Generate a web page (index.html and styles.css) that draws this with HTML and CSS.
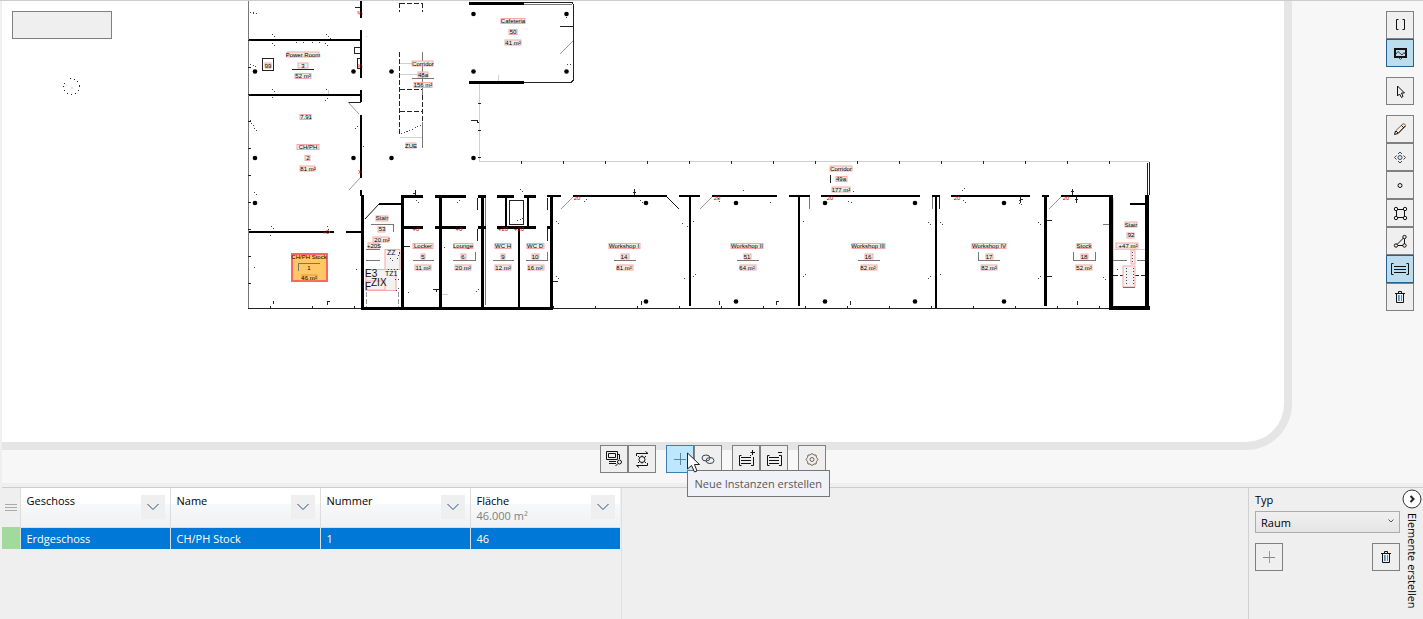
FILE: index.html
```html
<!DOCTYPE html>
<html lang="de">
<head>
<meta charset="utf-8">
<title>Grundriss – Elemente</title>
<link rel="stylesheet" href="styles.css">
</head>
<body>
<main class="workspace">
  <section class="paper" aria-label="Grundriss">
    <svg class="plan" viewBox="2 1 1282 441">
      <!-- thin grey outlines -->
      <path class="faint" d="M479.5 84V161.5H1149M400 137.5H422M400 63.5H422M400 74.5H422M498.5 75V81M1113 249.5H1145M1113.5 198V305M441 294.5H448M328 90V94M366 36H367"/>
      <path class="gray" d="M248.5 1V308M422.5 52V95M422.5 122V148M412 78.5H434M524 4.5H572M371 224.5H393V232M413 260.5H434M453 260.5H475V252M493 260.5H514M526 260.5H547V252M614 260.5H636M737 260.5H759M858 260.5H880M978.5 252V260.5H1000M1073.5 252V260.5H1095.5V252M1113 260.5H1127M1137 260.5H1145M366 249.5H380M366 260.5H380M485.5 198V305M1103 224.5H1109M932.5 197V209M809.5 197V209"/>
      <!-- dashed stair run in the corridor -->
      <path class="dash" d="M399.5 3V12M399.5 3.5H422M422.5 3V12M399.5 52V136M422.5 95V121M400 89.5H422M400 111.5H422M1113 275.5H1145"/>
      <path class="dash graydash" d="M366.5 292V307M398.5 292V307"/>
      <path class="speck" d="M401 134L422 125"/>
      <!-- outlines -->
      <path class="thin" d="M248 308.5H362M552 308.5H1110M292 69.5H314M348 102.5H361M560 26.5H573M524 2.5H572L573.5 5V80L571 82.5H524M471 120.5H477V122H479M477.5 198V210M547.5 198V210M477.5 229V241M547.5 229V241M403 246.5H410M830.5 175V183M939.5 197V209M1147.5 163V195M1149.5 162V195M1047 220.5H1052M1047 276.5H1052M433 289.5H439M436.5 289V292M553 281.5H558M262.5 58.5H273.5V70.5H262.5ZM354.5 47.5H360V53.5H354.5ZM357.5 58.5H361V68.5H357.5ZM509.5 200.5H523.5V224.5H509.5ZM355 7.5H361M1123 287.5H1135"/>
      <path class="slant" d="M348 102L359 114M349 190L360 178M560 54L573 41M561 209L573 197M700 209L712 197M1049 209L1061 197"/>
      <path class="slant dark" d="M365 219L379 204M667 197L679 209"/>
      <!-- walls -->
      <path class="wall" d="M249 40H361M249 95H361M361 1V18M361 30V78M361 90V102M361 115V178M361 190V196M249 232H334M346 232H362M379 204H401M519 229V307M690 197V306M799 197V306M936 197V308M506 197V227M528 197V227M1130 204H1146M573 196H667M679 196H700M712 196H777M789 196H810M821 196H920M932 196H940M951 196H1030M1042 196H1049M1061 196H1111M547 196H561"/>
      <path class="wall heavy" d="M469 3.500H524M469 82.500H524M362.500 195V310M402.500 195V308M440.500 195V308M482.500 195V308M551.500 195V310M362 308.500H552M402 196.500H423M435 196.500H466M478 196.500H486M497 196.500H514M524 196.500H536M402 227.500H423M435 227.500H466M478 227.500H486M497 227.500H536M547 227.500H552M1045.500 197V306"/>
      <path class="wall massive" d="M1111 195V310M1147 195V310M1109 308H1150"/>
      <!-- grid ticks -->
      <path class="ticks" d="M521 162H1149"/>
      <path class="ticks" d="M270 307H362M553 307H1110"/>
      <path class="ticks vertical" d="M249 40V308M479 103V160"/>
      <path class="speck" d="M250 12L257 14M272 34L276 38M326 34L331 39M250 64L256 67M272 43L276 48M325 43L329 48M272 89L275 92M326 89L330 92M272 97L275 101M325 101L329 97M250 120L257 132M355 129L359 125M363 146L366 150M254 192L257 195M271 226L275 231M270 235L274 238M327 226L330 234M254 267L257 272M356 269L359 273M296 42V45M303 42V45M312 42V45M319 42V45M416 200L420 204M457 203L462 199M444 247L448 250M408 293L411 289M476 292L479 289M520 189L526 194M517 221L524 218M584 202L588 199M640 200L643 203M682 223L688 227M684 278L688 281M693 221L697 224M693 277L697 274M718 198L720 203M770 203L773 199M803 221L806 225M803 277L806 274M928 222L932 226M928 279L932 276M940 222L943 225M940 275L943 273M962 191L965 188M963 200L966 203M1038 222L1042 226M1038 279L1042 276M1103 277L1107 281M556 221L559 224M556 276L559 279M743 190H745M848 201L852 203M1019 200V204H1022M853 191L856 195M566 17L570 20M567 64H572"/>
      <path class="thin" d="M273.500 301V304M329.500 301H327.500V305M413 193.500H416M415.500 190V195M633 192.500H636M634.500 189V195M641.500 301V305M719.500 301V305M776.500 305V301H779M850.500 305V301M1077.500 301V305M1020 199.500H1023M1020.500 197V203M1071 191.500H1074M1072.500 189V195M1075 199.500H1078M1076.500 197V203"/>
      <!-- columns -->
      <g class="columns">
        <circle cx="255" cy="71.500" r="2.300"/><circle cx="353.500" cy="71.500" r="2.300"/><circle cx="391.500" cy="71.500" r="2.300"/><circle cx="473.500" cy="14" r="2.300"/><circle cx="566.500" cy="14" r="2.300"/><circle cx="473.500" cy="71.500" r="2.300"/><circle cx="566.500" cy="71.500" r="2.300"/>
        <circle cx="255" cy="158" r="2.300"/><circle cx="353.500" cy="158" r="2.300"/><circle cx="391.500" cy="158" r="2.300"/><circle cx="473.500" cy="158" r="2.300"/><circle cx="255" cy="203" r="2.300"/>
        <circle cx="646" cy="203" r="2.300"/><circle cx="736" cy="203" r="2.300"/><circle cx="825" cy="203" r="2.300"/><circle cx="915" cy="203" r="2.300"/><circle cx="1004" cy="203" r="2.300"/>
        <circle cx="646" cy="301.500" r="2.300"/><circle cx="736" cy="301.500" r="2.300"/><circle cx="825" cy="301.500" r="2.300"/><circle cx="915" cy="301.500" r="2.300"/><circle cx="1004" cy="301.500" r="2.300"/>
      </g>
      <!-- selected room -->
      <rect class="selected" x="292" y="254" width="35" height="27"/>
      <path class="gray" d="M298.500 271V263.500H320"/>
      <!-- label frames -->
      <g class="frames">
        <rect x="501" y="18.500" width="24" height="5"/><rect x="509" y="29.500" width="8" height="5"/><rect x="505" y="40" width="16" height="5"/>
        <rect x="287" y="52" width="32" height="5"/><rect x="298" y="63" width="10" height="5"/><rect x="295" y="73.500" width="16" height="5"/><rect x="265" y="63" width="6" height="5"/>
        <rect x="412" y="61" width="21" height="5"/><rect x="418" y="72" width="10" height="5"/><rect x="414" y="82.500" width="18" height="5"/><rect x="406" y="143" width="10" height="5"/>
        <rect x="300" y="114.500" width="11" height="5"/><rect x="297" y="144.500" width="22" height="5"/><rect x="305" y="155.500" width="5" height="5"/><rect x="300" y="166" width="15" height="5"/>
        <rect x="376" y="216" width="12" height="5"/><rect x="378" y="227" width="7" height="5"/><rect x="373" y="237" width="16" height="5"/><rect x="368" y="243" width="11" height="5"/>
        <rect x="413" y="243.500" width="20" height="5"/><rect x="421" y="254" width="4" height="5"/><rect x="415" y="265" width="16" height="5"/>
        <rect x="454" y="243.500" width="19" height="5"/><rect x="461" y="254" width="5" height="5"/><rect x="455" y="265" width="16" height="5"/>
        <rect x="495" y="243.500" width="16" height="5"/><rect x="501" y="254" width="4" height="5"/><rect x="495" y="265" width="16" height="5"/>
        <rect x="527" y="243.500" width="17" height="5"/><rect x="532" y="254" width="7" height="5"/><rect x="528" y="265" width="16" height="5"/>
        <rect x="609" y="243.500" width="31" height="5"/><rect x="621" y="254" width="8" height="5"/><rect x="617" y="265" width="16" height="5"/>
        <rect x="731" y="243.500" width="32" height="5"/><rect x="744" y="254" width="7" height="5"/><rect x="740" y="265" width="16" height="5"/>
        <rect x="852" y="243.500" width="33" height="5"/><rect x="865" y="254" width="8" height="5"/><rect x="861" y="265" width="16" height="5"/>
        <rect x="972" y="243.500" width="34" height="5"/><rect x="986" y="254" width="7" height="5"/><rect x="981" y="265" width="16" height="5"/>
        <rect x="1077" y="243.500" width="14" height="5"/><rect x="1081" y="254" width="7" height="5"/><rect x="1076" y="265" width="16" height="5"/>
        <rect x="830" y="166" width="22" height="5"/><rect x="836" y="176.500" width="11" height="5"/><rect x="832" y="187" width="18" height="5"/>
        <rect x="1125" y="222" width="12" height="5"/><rect x="1127" y="233" width="7" height="5"/><rect x="1116" y="243" width="22" height="5"/>
        <rect x="302" y="275" width="15" height="5" class="clear"/>
      </g>
      <g class="frames shaft">
        <rect x="385" y="249.500" width="15" height="20"/><rect x="366" y="269.500" width="30" height="21"/><rect x="366" y="281" width="19" height="9"/><rect x="1131" y="250" width="4" height="14"/><rect x="1123" y="266" width="12" height="21"/>
      </g>
      <path class="speck" d="M388 269H400M397 259L400 251M395 279H400M390 258L393 261M396 291L400 287M1132.500 252V264M1126 268V286M1133 268V285M1117 270L1120 265"/>
      <g class="label">
        <text x="513" y="23">Cafeteria</text><text x="513" y="34">50</text><text x="513" y="45">41 m²</text>
        <text x="303" y="57">Power Room</text><text x="303" y="68">3</text><text x="303" y="78">52 m²</text><text x="268" y="68">99</text>
        <text x="423" y="66">Corridor</text><text x="423" y="77">48a</text><text x="423" y="87">156 m²</text><text x="411" y="148">ZUE</text>
        <text x="306" y="119">7.91</text><text x="308" y="149">CH/PH</text><text x="308" y="160">2</text><text x="308" y="171">81 m²</text>
        <text x="382" y="220">Stair</text><text x="382" y="231">53</text><text x="382" y="242">20 m²</text><text x="374" y="248">+20S</text>
        <text x="423" y="248">Locker</text><text x="423" y="259">5</text><text x="423" y="270">11 m²</text>
        <text x="463" y="248">Lounge</text><text x="463" y="259">6</text><text x="463" y="270">20 m²</text>
        <text x="503" y="248">WC H</text><text x="503" y="259">9</text><text x="503" y="270">12 m²</text>
        <text x="535" y="248">WC D</text><text x="535" y="259">10</text><text x="535" y="270">16 m²</text>
        <text x="624" y="248">Workshop I</text><text x="624" y="259">14</text><text x="624" y="270">81 m²</text>
        <text x="747" y="248">Workshop II</text><text x="747" y="259">51</text><text x="747" y="270">64 m²</text>
        <text x="868" y="248">Workshop III</text><text x="868" y="259">16</text><text x="868" y="270">82 m²</text>
        <text x="989" y="248">Workshop IV</text><text x="989" y="259">17</text><text x="989" y="270">82 m²</text>
        <text x="1084" y="248">Stock</text><text x="1084" y="259">18</text><text x="1084" y="270">52 m²</text>
        <text x="841" y="171">Corridor</text><text x="841" y="181">49a</text><text x="841" y="192">177 m²</text>
        <text x="1131" y="227">Stair</text><text x="1131" y="237">92</text><text x="1128" y="248">+47 m²</text>
        <text x="309" y="259">CH/PH Stock</text><text x="309" y="270">1</text><text x="309" y="280">46 m²</text>
      </g>
      <g class="shaft-text">
        <text x="365" y="277">E3</text><text x="387" y="255" class="small">ZZ</text><text x="385" y="276" class="small">TZ1</text><text x="365" y="290">F</text><text x="371" y="286">ZIX</text>
      </g>
      <g class="tag">
        <text x="360" y="15">%</text><text x="360" y="68">%</text><text x="360" y="174">X</text><text x="326" y="234">+0</text><text x="416" y="231">+0</text><text x="459" y="231">+0</text><text x="503" y="231">+20</text><text x="519" y="231">+20</text><text x="577" y="200">20</text><text x="717" y="200">20</text><text x="830" y="200">20</text><text x="957" y="200">20</text><text x="1066" y="200">20</text>
      </g>
      <circle class="compass" cx="71.500" cy="86.500" r="8"/>
      <path class="compass-dot" d="M71 87h2v2h-2z"/>
    </svg>
    <input class="canvas-field" type="text" aria-label="Bezeichnung">
  </section>

  <nav class="side-tools" aria-label="Zeichenwerkzeuge">
    <div class="stack">
      <button class="tool" aria-label="Klammern"><svg viewBox="0 0 26 26"><path class="ink" d="M11.500 7.500H9.500V17.500H11.500M15.500 7.500H17.500V17.500H15.500"/></svg></button>
      <button class="tool active" aria-label="Hintergrundbild"><svg viewBox="0 0 26 26"><path class="ink bold" d="M8 9H19V17H8Z"/><path class="ink soft" d="M9 14L11 11.500 15 15 17 12.500 18 14M11.500 17.500L13.500 19.500 15.500 17.500"/></svg></button>
    </div>
    <div class="stack">
      <button class="tool" aria-label="Auswählen"><svg viewBox="0 0 26 26"><path class="ink" d="M10.500 8V18L12.500 16 14.500 19.500 16 18.500 14.500 15H17.500Z"/></svg></button>
    </div>
    <div class="stack">
      <button class="tool" aria-label="Zeichnen"><svg viewBox="0 0 26 26"><path class="ink warm" d="M8.500 15L16 7.800Q18 7.500 18.500 9.500L11 17.500"/><path class="ink" d="M11 17.500L7.500 18.500 8.500 15M9 15L11 17M14.500 9.500L17 12M11 17.500L18.500 10"/></svg></button>
      <button class="tool" aria-label="Verschieben"><svg viewBox="0 0 26 26"><circle class="ink soft" cx="13" cy="13.500" r="2"/><path class="ink soft" d="M11 10L13 8 15 10M11 17L13 19 15 17M9.500 11.500L7.500 13.500 9.500 15.500M16.500 11.500L18.500 13.500 16.500 15.500"/></svg></button>
      <button class="tool" aria-label="Punkt"><svg viewBox="0 0 26 26"><circle class="ink" cx="13" cy="13.500" r="2"/></svg></button>
      <button class="tool" aria-label="Rechteck"><svg viewBox="0 0 26 26"><path class="ink" d="M9.500 11V16M17.500 11V16M11 9.500H16M11 17.500H16"/><circle class="ink" cx="9" cy="9" r="1.700"/><circle class="ink" cx="18" cy="9" r="1.700"/><circle class="ink" cx="9" cy="18" r="1.700"/><circle class="ink" cx="18" cy="18" r="1.700"/></svg></button>
      <button class="tool" aria-label="Polygon"><svg viewBox="0 0 26 26"><path class="ink" d="M10 16.500L16.500 10M17.500 11V16M11 17.500H16"/><circle class="ink" cx="17.500" cy="9" r="1.700"/><circle class="ink" cx="9" cy="17.500" r="1.700"/><circle class="ink" cx="17.500" cy="17.500" r="1.700"/></svg></button>
      <button class="tool active" aria-label="Beschriftung"><svg viewBox="0 0 26 26"><path class="ink" d="M6.500 7.500H4.500V18.500H6.500M19.500 7.500H21.500V18.500H19.500M7 10.500H19M7 13.500H19M7 16.500H19"/></svg></button>
      <button class="tool" aria-label="Löschen"><svg viewBox="0 0 26 26"><path class="ink" d="M8 9.500H18M11.500 9V7.500H14.500V9M9.500 9.500V18.500H16.500V9.500"/><path class="bin-blue" d="M11.500 11V17M14.500 11V17"/><path class="bin-warm" d="M12.500 11V17"/></svg></button>
    </div>
  </nav>

  <nav class="bottom-tools" aria-label="Elementwerkzeuge">
    <div class="row">
      <button class="tool" aria-label="Ansicht suchen"><svg viewBox="0 0 26 26"><path class="ink" d="M5.500 5.500H16.500V13.500H5.500ZM7.500 7.500H14.500V11.500H7.500ZM17 8.500H18.500V13M8 15.500H15M8 17.500H15"/><circle class="ink" cx="18.500" cy="16" r="2"/><path class="ink" d="M17 17.500L14.500 20"/></svg></button>
      <button class="tool" aria-label="Auf Auswahl zoomen"><svg viewBox="0 0 26 26"><circle class="ink" cx="13" cy="13.500" r="3"/><path class="ink" d="M7.500 10V7.500H19M16.500 5.500L19 7.500M18.500 17V19.500H7.500M10 21.500L7.500 19.500M13 9.500V10.500M13 16.500V17.500M9 10L10.500 11.500M17 10L15.500 11.500M9 17L10.500 15.500M17 17L15.500 15.500"/></svg></button>
    </div>
    <div class="row">
      <button class="tool hover" aria-label="Neue Instanzen erstellen" aria-describedby="tip"><svg viewBox="0 0 26 26"><path class="plus-blue" d="M7 13.500H19M13.500 7V19"/></svg></button>
      <button class="tool" aria-label="Verknüpfen"><svg viewBox="0 0 26 26"><ellipse class="ink soft" cx="11" cy="12" rx="4" ry="3"/><ellipse class="ink soft" cx="15" cy="14.500" rx="4" ry="3"/></svg></button>
      <svg class="cursor" viewBox="0 0 14 22" aria-hidden="true"><path d="M.5 1V17L4.500 13.500 7.500 20 10 19 7.500 12.500H12.500Z"/></svg>
      <span class="tooltip" id="tip" role="tooltip">Neue Instanzen erstellen</span>
    </div>
    <div class="row">
      <button class="tool" aria-label="Beschriftung hinzufügen"><svg viewBox="0 0 26 26"><path class="ink" d="M8.500 9.500H6.500V19.500H8.500M17 9.500H18M20.500 11V19.500H18M8 11.500H18M8 14.500H18M8 17.500H18M17.500 6.500H22M19.500 4V9"/></svg></button>
      <button class="tool" aria-label="Beschriftung entfernen"><svg viewBox="0 0 26 26"><path class="ink" d="M8.500 9.500H6.500V19.500H8.500M18 9.500H20.500V19.500H18M8 11.500H18M8 14.500H18M8 17.500H18M17 6.500H21"/></svg></button>
    </div>
    <div class="row">
      <button class="tool" aria-label="Einstellungen"><svg viewBox="0 0 26 26"><circle class="gear" cx="13" cy="13.500" r="2"/><path class="gear" d="M13 7.500L15 9 17 9 17.500 11.500 19 13.500 17.500 15.500 17 18 15 18 13 19.500 11 18 9 18 8.500 15.500 7 13.500 8.500 11.500 9 9 11 9Z"/></svg></button>
    </div>
  </nav>
</main>

<div class="dock">
  <section class="grid-area">
    <table class="grid">
      <colgroup><col class="handle-col"><col><col><col><col></colgroup>
      <thead>
        <tr>
          <td class="handle"><svg viewBox="0 0 12 8"><path d="M0 .5H12M0 3.500H12M0 6.500H12"/></svg></td>
          <th scope="col"><div class="head"><span class="title">Geschoss</span><button class="filter" aria-label="Geschoss filtern"><svg viewBox="0 0 12 8"><path d="M.5 1L6 6.500 11.500 1"/></svg></button></div></th>
          <th scope="col"><div class="head"><span class="title">Name</span><button class="filter" aria-label="Name filtern"><svg viewBox="0 0 12 8"><path d="M.5 1L6 6.500 11.500 1"/></svg></button></div></th>
          <th scope="col"><div class="head"><span class="title">Nummer</span><button class="filter" aria-label="Nummer filtern"><svg viewBox="0 0 12 8"><path d="M.5 1L6 6.500 11.500 1"/></svg></button></div></th>
          <th scope="col"><div class="head"><span class="title">Fläche<small>46.000 m²</small></span><button class="filter" aria-label="Fläche filtern"><svg viewBox="0 0 12 8"><path d="M.5 1L6 6.500 11.500 1"/></svg></button></div></th>
        </tr>
      </thead>
      <tbody>
        <tr class="picked"><td class="marker"></td><td>Erdgeschoss</td><td>CH/PH Stock</td><td>1</td><td>46</td></tr>
      </tbody>
    </table>
  </section>
  <aside class="create">
    <div class="form">
      <label for="typ">Typ</label>
      <div class="select-box">
        <select id="typ"><option>Raum</option></select>
        <svg viewBox="0 0 6 4"><path d="M.5 .5L3 3 5.500 .5"/></svg>
      </div>
      <div class="actions">
        <button class="tool" aria-label="Typ hinzufügen"><svg viewBox="0 0 26 26"><path class="plus-gray" d="M7 13.500H19"/><path class="plus-warm" d="M13.500 7V19"/></svg></button>
        <button class="tool" aria-label="Typ löschen"><svg viewBox="0 0 26 26"><path class="ink" d="M8 9.500H18M11.500 9V7.500H14.500V9M9.500 9.500V18.500H16.500V9.500"/><path class="bin-blue" d="M11.500 11V17M14.500 11V17"/><path class="bin-warm" d="M12.500 11V17"/></svg></button>
      </div>
    </div>
    <button class="expander">
      <svg viewBox="0 0 20 20"><circle cx="10" cy="10" r="9"/><path d="M8.500 7L11.500 10 8.500 13"/></svg>
      <span>Elemente erstellen</span>
    </button>
  </aside>
</div>
</body>
</html>
```

FILE: styles.css
```css
* { box-sizing: border-box; }
html, body { height: 100%; }
body {
  margin: 0;
  display: flex;
  flex-direction: column;
  border-top: 1px solid #ccc;
  background: #efefef;
  color: #000;
  font: 11px/16px "Open Sans", "Noto Sans", sans-serif;
  overflow: hidden;
}
button, input, select { font: inherit; color: inherit; margin: 0; }
svg { display: block; }

/* drawing area */
.workspace {
  position: relative;
  flex: 1;
  min-height: 0;
  display: flex;
  justify-content: space-between;
  margin-left: 2px;
  padding-bottom: 33px;
  background: #f7f7f7;
}
.paper {
  position: relative;
  flex: 1;
  margin-right: 94px;
  background: #fff;
  border: solid #e5e5e5;
  border-width: 0 8px 8px 0;
  border-bottom-right-radius: 46px;
}
.plan { width: 100%; height: 100%; }
.canvas-field {
  position: absolute;
  left: 10px;
  top: 10px;
  width: 100px;
  height: 28px;
  border: 1px solid #808080;
  background: #efefef;
}

/* plan strokes */
.plan path { fill: none; stroke: #000; stroke-width: 1; shape-rendering: crispEdges; }
.plan .faint { stroke: #d0d0d0; }
.plan .gray { stroke: #777; }
.plan .thin { stroke: #222; }
.plan .dash { stroke: #222; stroke-dasharray: 5 2; }
.plan .graydash { stroke: #999; }
.plan .speck { stroke: #444; stroke-dasharray: 1 2; }
.plan .slant { stroke: #999; shape-rendering: auto; }
.plan .dark { stroke: #111; }
.plan .wall { stroke-width: 2; }
.plan .heavy { stroke-width: 3; }
.plan .massive { stroke-width: 4; }
.plan .ticks { stroke: #222; stroke-width: 3; stroke-dasharray: 1 41; }
.plan .vertical { stroke-dasharray: 1 26; }
.columns { fill: #000; }
.selected { fill: #ffc864; stroke: #ff6464; stroke-width: 2; }
.frames rect { fill: #e9f0e4; stroke: #f9a8a8; stroke-width: 1; }
.frames .clear { fill: none; stroke: #f09040; }
.shaft rect { fill: #f2f2f2; }
.label text { font: 6px "Liberation Sans", sans-serif; text-anchor: middle; fill: #000; }
.shaft-text text { font: 10px "Liberation Sans", sans-serif; fill: #111; }
.shaft-text .small { font-size: 7px; }
.tag text { font: 6px "Liberation Sans", sans-serif; text-anchor: middle; fill: #b00; }
.compass { fill: none; stroke: #222; stroke-dasharray: 1 3; shape-rendering: crispEdges; }
.plan .compass-dot { fill: #ddf; stroke: none; }

/* tool buttons */
.tool {
  width: 28px;
  height: 28px;
  flex: none;
  padding: 0;
  border: 1px solid #808080;
  background: #efefef;
}
.tool svg { width: 26px; height: 26px; }
.tool.active { border-color: #26608f; background: #bcddee; }
.tool.hover { border-color: #3c7fb1; background: #bee6fd; }
.ink { fill: none; stroke: #111; }
.bold { stroke-width: 2; }
.soft { stroke: #3c4550; }
.warm { stroke: #8a5530; }
.gear { fill: none; stroke: #74634f; }
.plus-blue { fill: none; stroke: #5a86a0; }
.plus-gray { stroke: #888; }
.plus-warm { stroke: #e08a30; }
.bin-blue { stroke: #4c92c4; }
.bin-warm { stroke: #d09a50; }
.side-tools { display: flex; flex-direction: column; gap: 10px; padding: 10px 9px 0 0; }
.stack { display: flex; flex-direction: column; }
.bottom-tools {
  position: absolute;
  left: 0;
  right: 0;
  bottom: 10px;
  display: flex;
  justify-content: center;
  gap: 10px;
}
.row { position: relative; display: flex; }
.cursor { position: absolute; z-index: 2; left: 21px; top: 7px; width: 14px; height: 22px; }
.cursor path { fill: #fff; stroke: #222; }
.tooltip {
  position: absolute;
  z-index: 1;
  left: 21px;
  top: 25px;
  padding: 5px 7px 4px;
  border: 1px solid #767676;
  background: #f1f2f7;
  color: #575757;
  white-space: nowrap;
}

/* lower dock */
.dock {
  display: flex;
  flex: none;
  height: 132px;
  margin: 4px 0 0 2px;
  border-top: 1px solid #ccc;
}
.grid-area { flex: none; padding-right: 1px; border-right: 1px solid #e0e0e0; }
.grid { border-collapse: collapse; table-layout: fixed; width: 618px; }
.grid th, .grid td { padding: 0; text-align: left; font-weight: 400; }
.handle-col { width: 18px; }
.handle svg { width: 12px; height: 8px; margin: 0 auto; }
.handle path { stroke: #aaa; }
.grid th {
  height: 39px;
  border-left: 1px solid #ddd;
  border-bottom: 1px solid #ddd;
  background: linear-gradient(#fff 40%, #f7f8f9 41%, #f0f1f2);
}
.head { display: flex; justify-content: space-between; height: 38px; padding: 5px 5px 0 6px; }
.title small { display: block; font-size: 11px; line-height: 14px; color: #808080; }
.filter {
  display: grid;
  place-items: center;
  width: 24px;
  height: 24px;
  margin-top: 2px;
  padding: 0;
  border: 0;
  background: #efefef;
}
.filter svg { width: 12px; height: 8px; }
.filter path { fill: none; stroke: #22507c; }
.grid .picked td { height: 22px; padding: 2px 6px 0; border-left: 1px solid #ddd; background: #0078d7; color: #fff; }
.grid .picked .marker { padding: 0; border: 0; background: #a2d99c; }

.create { display: flex; margin-left: auto; border-left: 1px solid #d0d0d0; }
.form { display: flex; flex-direction: column; width: 151px; padding: 4px 0 0 6px; }
.select-box { position: relative; margin-top: 3px; }
.select-box select {
  display: block;
  width: 100%;
  height: 22px;
  padding: 1px 5px 0;
  border: 1px solid #acacac;
  border-radius: 0;
  background: linear-gradient(#f0f0f0, #e5e5e5);
  appearance: none;
}
.select-box svg { position: absolute; right: 6px; top: 8px; width: 6px; height: 4px; pointer-events: none; }
.select-box path { fill: none; stroke: #555; }
.actions { display: flex; justify-content: space-between; margin-top: 10px; }
.expander {
  display: flex;
  flex-direction: column;
  align-items: center;
  gap: 4px;
  width: 23px;
  padding: 1px 0 0;
  border: 0;
  background: none;
}
.expander svg { width: 20px; height: 20px; }
.expander circle { fill: #fff; stroke: #333; }
.expander path { fill: none; stroke: #222; stroke-width: 2; }
.expander span { writing-mode: vertical-rl; line-height: 16px; white-space: nowrap; }
```
